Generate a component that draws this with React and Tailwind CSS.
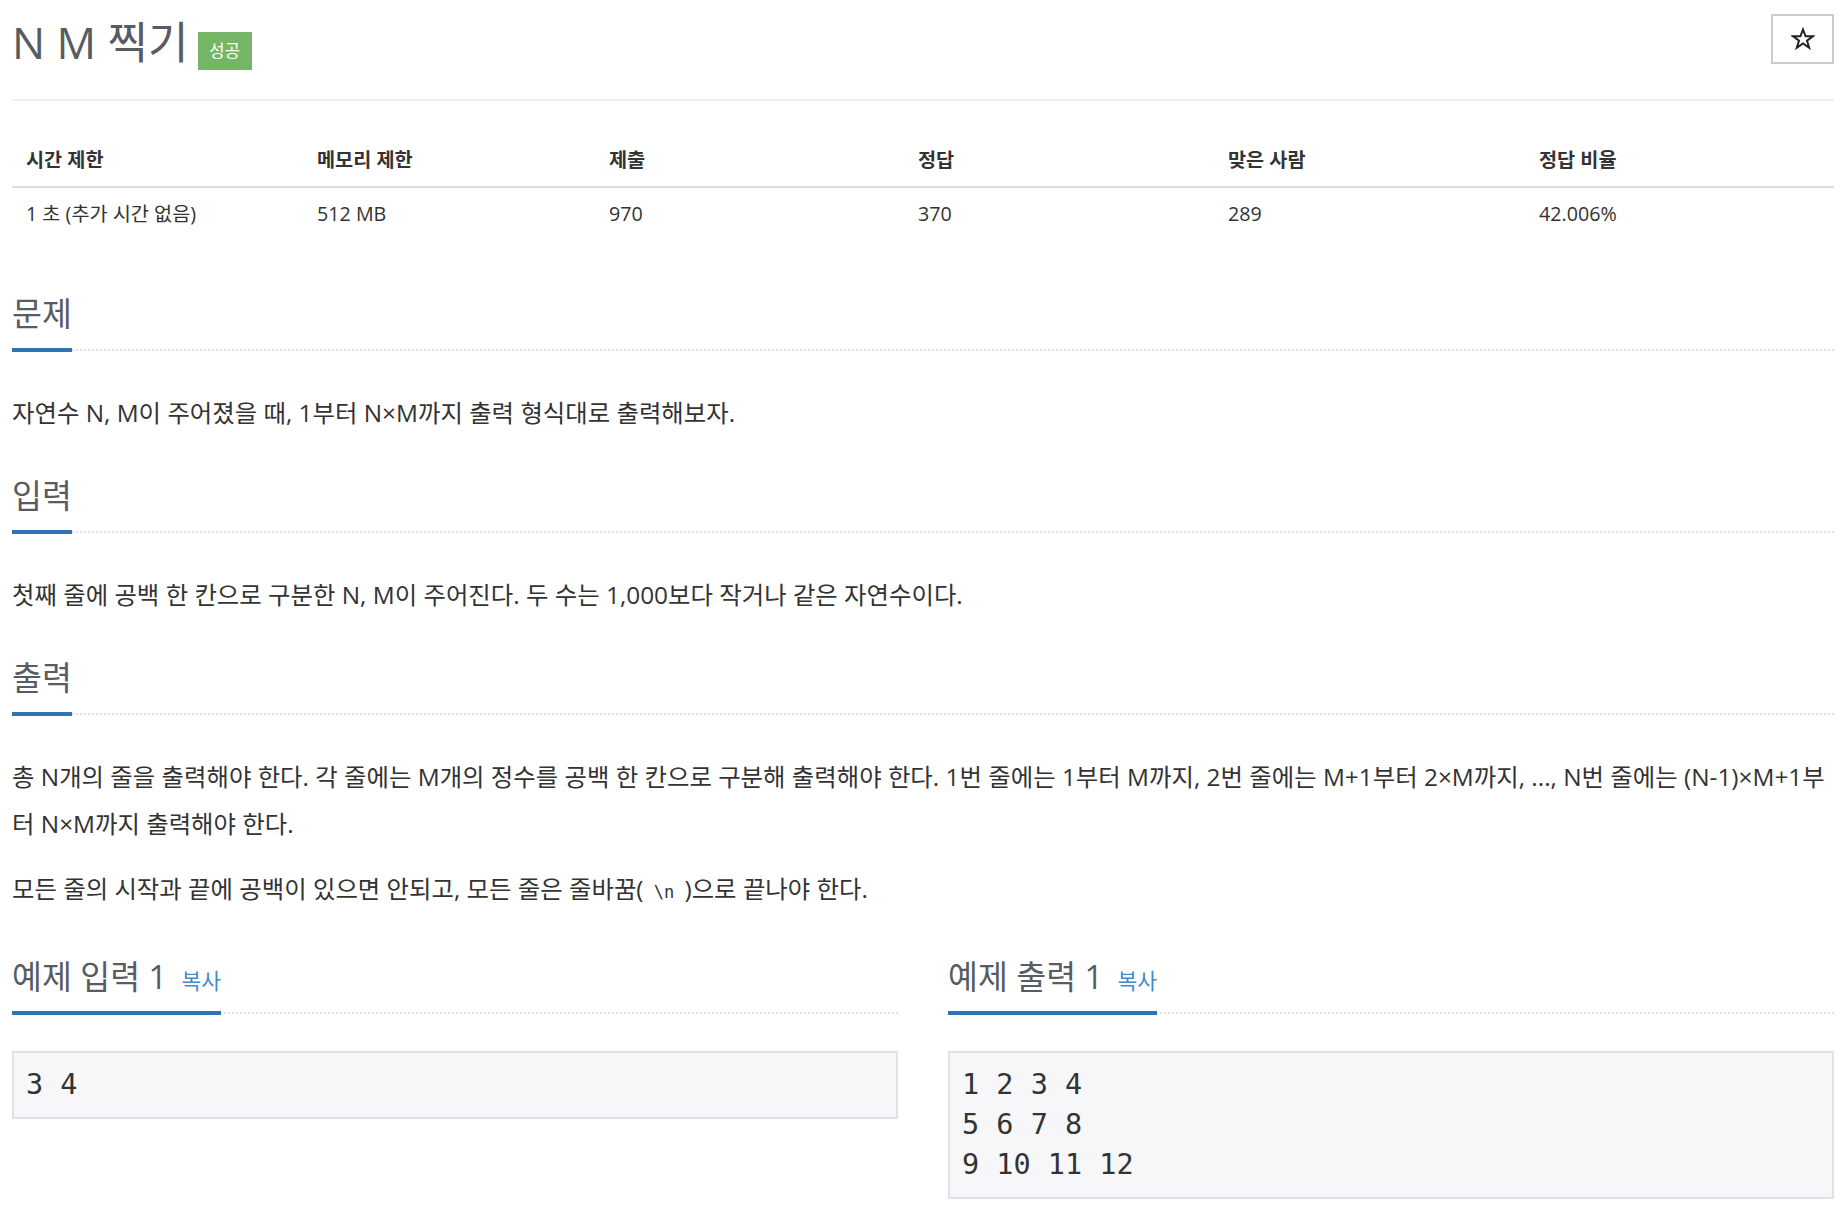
import React from 'react';

// Section heading: blue bar under the title, dotted rule running to the right edge
const Headline = ({ children }) => (
  <div className="flex border-b-2 border-dotted border-[#e2e2e2]">
    <h2 className="-mb-[3px] border-b-4 border-[#3173b5] pb-[14px] text-[32.5px] font-normal leading-[40px] text-[#575c63]">
      {children}
    </h2>
  </div>
);

const stats = [
  ['시간 제한', '1 초 (추가 시간 없음)'],
  ['메모리 제한', '512 MB'],
  ['제출', '970'],
  ['정답', '370'],
  ['맞은 사람', '289'],
  ['정답 비율', '42.006%'],
];

const App = () => {
  return (
    <div className="min-h-screen bg-white px-[12px] text-[#333] font-['Open_Sans','Noto_Sans_CJK_KR',sans-serif]">
      {/* title row */}
      <div className="flex h-[101px] items-start justify-between border-b-2 border-[#eeeeee]">
        <div className="flex items-start pt-[18px]">
          <h1 className="text-[44px] font-normal leading-[48px] text-[#575c63]">N M 찍기</h1>
          <span className="ml-[9px] mt-[14px] flex h-[38px] w-[54px] items-center justify-center bg-[#74b566] text-[17px] text-white">
            성공
          </span>
        </div>
        <button className="mt-[14px] flex h-[50px] w-[63px] items-center justify-center border-2 border-[#cccccc] bg-white">
          <svg width="24" height="24" viewBox="0 0 24 24" fill="none" stroke="#222" strokeWidth="2" strokeLinejoin="miter">
            <polygon points="12,2.5 14.6,9.3 21.8,9.3 16,13.7 18.2,20.8 12,16.5 5.8,20.8 8,13.7 2.2,9.3 9.4,9.3" />
          </svg>
        </button>
      </div>

      {/* limits table */}
      <div className="mt-[33px] grid grid-cols-[291px_292px_309px_310px_311px_1fr] text-[19.7px]">
        {stats.map(([h]) => (
          <div key={h} className="border-b-2 border-[#dddddd] px-[14px] py-[12px] font-bold leading-[28px]">
            {h}
          </div>
        ))}
        {stats.map(([h, v]) => (
          <div key={h + 'v'} className="px-[14px] py-[12px] leading-[28px]">
            {v}
          </div>
        ))}
      </div>

      {/* 문제 */}
      <section className="mt-[54px]">
        <Headline>문제</Headline>
        <p className="mt-[38px] text-[24.4px] leading-[47px]">
          자연수 N, M이 주어졌을 때, 1부터 N×M까지 출력 형식대로 출력해보자.
        </p>
      </section>

      {/* 입력 */}
      <section className="mt-[40px]">
        <Headline>입력</Headline>
        <p className="mt-[38px] text-[24.4px] leading-[47px]">
          첫째 줄에 공백 한 칸으로 구분한 N, M이 주어진다. 두 수는 1,000보다 작거나 같은 자연수이다.
        </p>
      </section>

      {/* 출력 */}
      <section className="mt-[40px]">
        <Headline>출력</Headline>
        <p className="mt-[38px] text-[24.4px] leading-[47px]">
          총 N개의 줄을 출력해야 한다. 각 줄에는 M개의 정수를 공백 한 칸으로 구분해 출력해야 한다. 1번 줄에는 1부터 M까지, 2번 줄에는 M+1부터 2×M까지, ..., N번 줄에는 (N-1)×M+1부터 N×M까지 출력해야 한다.
        </p>
        <p className="mt-[18px] text-[24.4px] leading-[47px]">
          모든 줄의 시작과 끝에 공백이 있으면 안되고, 모든 줄은 줄바꿈(<code className="font-['DejaVu_Sans_Mono',monospace] text-[17px]"> \n </code>)으로 끝나야 한다.
        </p>
      </section>

      {/* samples */}
      <div className="mt-[41px] grid grid-cols-2 gap-x-[50px] pb-[12px]">
        <section>
          <Headline>
            예제 입력 1 <a className="ml-[6px] text-[21.5px] leading-none text-[#428bca]">복사</a>
          </Headline>
          <pre className="mt-[37px] border-2 border-[#e1e1e8] bg-[#f7f7f9] px-[12px] py-[12px] text-[28.5px] leading-[40px] text-[#333] font-['DejaVu_Sans_Mono',monospace]">
            3 4
          </pre>
        </section>
        <section>
          <Headline>
            예제 출력 1 <a className="ml-[6px] text-[21.5px] leading-none text-[#428bca]">복사</a>
          </Headline>
          <pre className="mt-[37px] border-2 border-[#e1e1e8] bg-[#f7f7f9] px-[12px] py-[12px] text-[28.5px] leading-[40px] text-[#333] font-['DejaVu_Sans_Mono',monospace]">
            {'1 2 3 4\n5 6 7 8\n9 10 11 12'}
          </pre>
        </section>
      </div>
    </div>
  );
};

export default App;
